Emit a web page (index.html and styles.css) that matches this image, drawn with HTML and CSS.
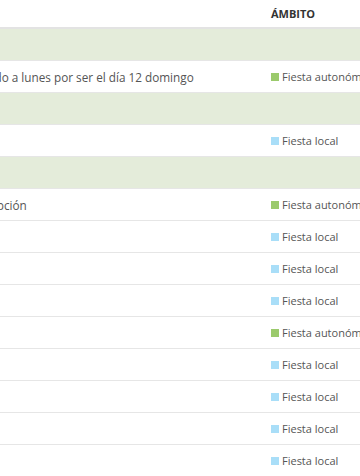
FILE: index.html
```html
<!DOCTYPE html>
<html lang="es">
<head>
<meta charset="utf-8">
<title>Festivos</title>
<link rel="stylesheet" href="styles.css">
</head>
<body>
<div class="scroller">
  <table class="fest">
    <colgroup>
      <col class="c-fecha">
      <col class="c-desc">
      <col class="c-amb">
    </colgroup>
    <thead>
      <tr><th>Fecha</th><th>Descripción</th><th>Ámbito</th></tr>
    </thead>
    <tbody>
      <tr class="month"><td colspan="3">Octubre</td></tr>
      <tr><td>13/10</td><td class="desc">Hispanidad, trasladado a lunes por ser el día 12 domingo</td><td><span class="tag auto">Fiesta autonómica</span></td></tr>
      <tr class="month"><td colspan="3">Noviembre</td></tr>
      <tr><td>11/11</td><td class="desc"></td><td><span class="tag local">Fiesta local</span></td></tr>
      <tr class="month"><td colspan="3">Diciembre</td></tr>
      <tr><td>08/12</td><td class="desc">La&#8202;Inmaculada Concepción</td><td><span class="tag auto">Fiesta autonómica</span></td></tr>
      <tr><td>09/12</td><td class="desc"></td><td><span class="tag local">Fiesta local</span></td></tr>
      <tr><td>10/12</td><td class="desc"></td><td><span class="tag local">Fiesta local</span></td></tr>
      <tr><td>11/12</td><td class="desc"></td><td><span class="tag local">Fiesta local</span></td></tr>
      <tr><td>12/12</td><td class="desc"></td><td><span class="tag auto">Fiesta autonómica</span></td></tr>
      <tr><td>15/12</td><td class="desc"></td><td><span class="tag local">Fiesta local</span></td></tr>
      <tr><td>16/12</td><td class="desc"></td><td><span class="tag local">Fiesta local</span></td></tr>
      <tr><td>17/12</td><td class="desc"></td><td><span class="tag local">Fiesta local</span></td></tr>
      <tr><td>18/12</td><td class="desc"></td><td><span class="tag local">Fiesta local</span></td></tr>
    </tbody>
  </table>
</div>
</body>
</html>
```
FILE: styles.css
```css
html, body {
  margin: 0;
  padding: 0;
  background: #ffffff;
}
body {
  font-family: "Open Sans", "Liberation Sans", sans-serif;
  font-size: 11px;
  color: #555555;
}
.scroller {
  width: 360px;
  height: 476px;
  overflow: hidden;
}
.fest {
  border-collapse: collapse;
  table-layout: fixed;
  width: 700px;
  margin-left: -200px;
}
.c-fecha { width: 74px; }
.c-desc { width: 389px; }
.c-amb { width: 237px; }
.fest th {
  height: 27px;
  padding: 0 8px;
  text-align: left;
  font-weight: 700;
  text-transform: uppercase;
  color: #333333;
  border-bottom: 2px solid #e3e3e3;
  vertical-align: middle;
}
.fest td {
  height: 31px;
  padding: 0 8px;
  border-top: 1px solid #e6e6e6;
  white-space: nowrap;
  overflow: hidden;
  vertical-align: middle;
}
.fest td.desc {
  font-size: 11.75px;
}
.fest tr.month td {
  background: #e4ecda;
}
.tag {
  display: inline-flex;
  align-items: center;
  gap: 3px;
}
.tag::before {
  content: "";
  width: 8px;
  height: 8px;
}
.tag.auto::before { background: #9bca6c; }
.tag.local::before { background: #a9def8; }
```
